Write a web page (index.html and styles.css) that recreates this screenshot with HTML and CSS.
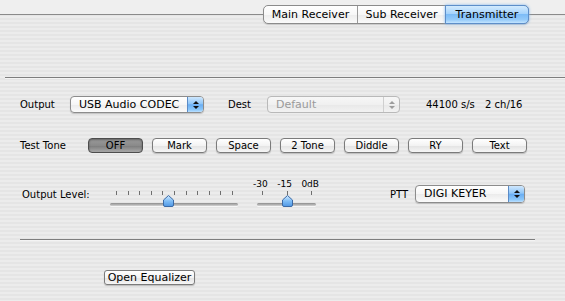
FILE: index.html
```html
<!DOCTYPE html>
<html lang="en">
<head>
<meta charset="UTF-8">
<title>Transmitter</title>
<link rel="stylesheet" href="styles.css">
</head>
<body>
<div class="header">
    <div class="tabs">
        <div class="tab tab-main">Main Receiver</div>
        <div class="tab tab-sub">Sub Receiver</div>
        <div class="tab tab-tx selected">Transmitter</div>
    </div>
</div>

<div class="sep sep-top"></div>

<div class="row row-output">
    <span class="lbl lbl-output">Output</span>
    <div class="popup popup-output">
        <span class="popup-text">USB Audio CODEC</span>
        <span class="stepper"><i class="up"></i><i class="down"></i></span>
    </div>
    <span class="lbl lbl-dest">Dest</span>
    <div class="popup popup-dest disabled">
        <span class="popup-text">Default</span>
        <span class="stepper"><i class="up"></i><i class="down"></i></span>
    </div>
    <span class="info info-rate">44100 s/s</span>
    <span class="info">2 ch/16</span>
</div>

<div class="row row-tone">
    <span class="lbl lbl-tone">Test Tone</span>
    <div class="tone-buttons">
        <button class="btn pressed">OFF</button>
        <button class="btn">Mark</button>
        <button class="btn">Space</button>
        <button class="btn">2 Tone</button>
        <button class="btn">Diddle</button>
        <button class="btn">RY</button>
        <button class="btn">Text</button>
    </div>
</div>

<div class="row row-level">
    <span class="lbl lbl-level">Output Level:</span>
    <div class="slider slider-level">
        <div class="scale"></div>
        <div class="ticks">
            <i></i><i></i><i></i><i></i><i></i><i></i><i></i><i></i><i></i><i></i><i></i>
        </div>
        <div class="track"></div>
        <svg class="thumb thumb-level" width="11" height="12" viewBox="0 0 11 12">
            <defs>
                <linearGradient id="tg1" x1="0" y1="0" x2="0" y2="1">
                    <stop offset="0" stop-color="#d4ebff"/>
                    <stop offset="0.5" stop-color="#7fbdf6"/>
                    <stop offset="1" stop-color="#4f97e4"/>
                </linearGradient>
            </defs>
            <path d="M5.5 0.5 L10.5 5 L10.5 10 Q10.5 11.5 9 11.5 L2 11.5 Q0.5 11.5 0.5 10 L0.5 5 Z" fill="url(#tg1)" stroke="#3b6aa6" stroke-width="1"/>
        </svg>
    </div>
    <div class="slider slider-db">
        <div class="scale"><span>-30</span><span>-15</span><span>0dB</span></div>
        <div class="ticks"><i></i><i></i><i></i></div>
        <div class="track"></div>
        <svg class="thumb thumb-db" width="11" height="12" viewBox="0 0 11 12">
            <path d="M5.5 0.5 L10.5 5 L10.5 10 Q10.5 11.5 9 11.5 L2 11.5 Q0.5 11.5 0.5 10 L0.5 5 Z" fill="url(#tg1)" stroke="#3b6aa6" stroke-width="1"/>
        </svg>
    </div>
    <span class="lbl lbl-ptt">PTT</span>
    <div class="popup popup-ptt">
        <span class="popup-text">DIGI KEYER</span>
        <span class="stepper"><i class="up"></i><i class="down"></i></span>
    </div>
</div>

<div class="sep sep-bottom"></div>

<button class="btn btn-eq">Open Equalizer</button>

</body>
</html>
```

FILE: styles.css
```css
body {
    margin: 0;
    width: 565px;
    height: 301px;
    overflow: hidden;
    font-family: "DejaVu Sans", Verdana, sans-serif;
    font-size: 10px;
    color: #000;
    background: repeating-linear-gradient(to bottom, #ececec 0, #ececec 2px, #e5e5e5 2px, #e5e5e5 4px);
}

.header {
    height: 26px;
    padding-top: 5px;
    box-sizing: border-box;
    display: flex;
    justify-content: flex-end;
    padding-right: 36px;
    background: linear-gradient(to bottom, #efefef 0, #efefef 14px, #8a8a8a 14px, #8a8a8a 15px, transparent 15px);
}

.tabs {
    display: flex;
    height: 19px;
    border: 1px solid #8b8b8b;
    border-radius: 5px;
    box-sizing: border-box;
    background: linear-gradient(to bottom, #ffffff 0, #f7f7f7 50%, #ececec 51%, #fafafa 100%);
    box-shadow: 0 1px 1px rgba(0, 0, 0, 0.15);
}
.tab {
    display: flex;
    align-items: center;
    justify-content: center;
    font-size: 11px;
    line-height: 17px;
}
.tab-main {
    width: 93px;
    border-right: 1px solid #9a9a9a;
}
.tab-sub {
    width: 87px;
}
.tab-tx {
    width: 84px;
}
.tab.selected {
    margin: -1px -1px -1px 0;
    height: 19px;
    border: 1px solid #5d8ec9;
    border-radius: 0 5px 5px 0;
    box-sizing: border-box;
    background: linear-gradient(to bottom, #d3ebfe 0, #a6d3fb 45%, #7dbcf7 50%, #94caf9 80%, #c3e4ff 100%);
    box-shadow: 0 0 3px #7fb6ee;
}

.sep {
    height: 0;
    border-top: 1px solid #7e7e7e;
    border-bottom: 1px solid #f4f4f4;
}
.sep-top {
    margin: 51px 0 0 5px;
}
.sep-bottom {
    margin: 0 0 0 20px;
    width: 515px;
}

.row {
    display: flex;
    align-items: center;
}
.lbl, .info {
    font-size: 10px;
    white-space: nowrap;
}

.row-output {
    margin-top: 17px;
    height: 17px;
}
.lbl-output {
    width: 50px;
    margin-left: 20px;
}
.lbl-dest {
    width: 39px;
    margin-left: 24px;
}
.info-rate {
    margin-left: 26px;
    width: 59px;
}

.popup {
    height: 17px;
    box-sizing: border-box;
    border: 1px solid #8c8c8c;
    border-radius: 4px;
    display: flex;
    align-items: center;
    background: linear-gradient(to bottom, #ffffff 0, #f6f6f6 50%, #ebebeb 51%, #fbfbfb 100%);
    box-shadow: 0 1px 1px rgba(0, 0, 0, 0.18);
    overflow: hidden;
}
.popup-text {
    flex: 1;
    padding-left: 8px;
    font-size: 11px;
    white-space: nowrap;
}
.popup-output {
    width: 134px;
}
.popup-dest {
    width: 133px;
}
.popup-ptt {
    width: 110px;
    height: 18px;
}
.stepper {
    width: 15px;
    align-self: stretch;
    display: flex;
    flex-direction: column;
    align-items: center;
    justify-content: center;
    gap: 2px;
    border-left: 1px solid #5b8bc6;
    background: linear-gradient(to bottom, #cfe7fd 0, #8fc6f8 45%, #6aaef3 52%, #8cc8fa 85%, #bde0ff 100%);
}
.stepper i {
    width: 0;
    height: 0;
    border-left: 3px solid transparent;
    border-right: 3px solid transparent;
}
.stepper .up {
    border-bottom: 3px solid #111;
}
.stepper .down {
    border-top: 3px solid #111;
}
.popup.disabled {
    border-color: #b9b9b9;
    box-shadow: none;
    background: linear-gradient(to bottom, #f7f7f7 0, #f0f0f0 50%, #e8e8e8 51%, #f2f2f2 100%);
}
.popup.disabled .popup-text {
    color: #9a9a9a;
}
.popup.disabled .stepper {
    background: transparent;
    border-left: 1px solid #cfcfcf;
}
.popup.disabled .stepper .up {
    border-bottom-color: #9c9c9c;
}
.popup.disabled .stepper .down {
    border-top-color: #9c9c9c;
}

.row-tone {
    margin-top: 25px;
    height: 15px;
}
.lbl-tone {
    width: 68px;
    margin-left: 20px;
}
.tone-buttons {
    display: grid;
    grid-template-columns: repeat(7, 55px);
    column-gap: 9px;
}

.btn {
    height: 15px;
    padding: 0;
    font-family: "DejaVu Sans", Verdana, sans-serif;
    font-size: 10px;
    line-height: 13px;
    color: #000;
    border: 1px solid #7b7b7b;
    border-radius: 4px;
    background: linear-gradient(to bottom, #ffffff 0, #f3f3f3 50%, #e4e4e4 55%, #f6f6f6 100%);
    box-shadow: 0 1px 1px rgba(0, 0, 0, 0.2);
}
.btn.pressed {
    border-color: #4d4d4d;
    background: linear-gradient(to bottom, #9a9a9a 0, #8a8a8a 50%, #7e7e7e 55%, #a8a8a8 100%);
    box-shadow: inset 0 1px 2px rgba(0, 0, 0, 0.35);
}

.row-level {
    margin-top: 26px;
    height: 29px;
}
.lbl-level {
    width: 88px;
    margin-left: 22px;
    align-self: center;
    padding-top: 2px;
}
.slider {
    position: relative;
    align-self: stretch;
}
.slider-level {
    width: 128px;
}
.slider-db {
    width: 59px;
    margin-left: 19px;
}
.scale {
    height: 10px;
    display: flex;
    justify-content: space-between;
    font-size: 9px;
    line-height: 10px;
    margin: 0 -3px 0 -4px;
}
.ticks {
    display: flex;
    justify-content: space-between;
    margin-top: 2px;
    height: 4px;
    padding: 0 5px 0 6px;
}
.slider-db .ticks {
    padding: 0 4px 0 5px;
}
.ticks i {
    width: 1px;
    height: 4px;
    background: #6e6e6e;
}
.track {
    margin-top: 8px;
    height: 3px;
    border-radius: 2px;
    background: linear-gradient(to bottom, #8d8d8d 0, #b5b5b5 60%, #d5d5d5 100%);
    box-shadow: 0 1px 0 #f6f6f6;
}
.thumb {
    position: absolute;
    top: 16px;
}
.thumb-level {
    left: 53px;
}
.thumb-db {
    left: 25px;
}

.lbl-ptt {
    margin-left: 74px;
    width: 25px;
    align-self: center;
    padding-top: 1px;
}

.sep-bottom {
    margin-top: 31px;
}

.btn-eq {
    display: block;
    margin: 29px 0 0 104px;
    width: 91px;
    height: 15px;
    font-size: 11px;
    border-radius: 3px;
}
```
